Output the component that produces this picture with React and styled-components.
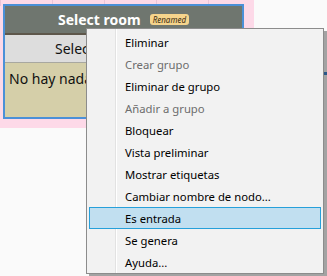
import React from "react";
import styled, { createGlobalStyle } from "styled-components";

const Global = createGlobalStyle`
  html, body { margin: 0; padding: 0; }
  body {
    background: #fafafa;
    width: 327px;
    height: 276px;
    overflow: hidden;
    font-family: "Noto Sans", "Open Sans", sans-serif;
  }
`;

const Page = styled.div`
  position: relative;
  width: 327px;
  height: 276px;
`;

const Canvas = styled.div`
  width: 254px;
  height: 128px;
  box-sizing: border-box;
  padding: 4px 0 0 3px;
  background-color: #fdd9e8;
  background-image:
    linear-gradient(to right, rgba(200, 160, 190, 0.35) 1px, transparent 1px);
  background-size: 52px 6px;
  background-repeat: repeat-x;
`;

const Node = styled.div`
  width: 241px;
  box-sizing: border-box;
  border: 2px solid #4b90d8;
  display: flex;
  flex-direction: column;
`;

const Header = styled.div`
  height: 27px;
  background: #6f766f;
  border-bottom: 2px solid #5e574b;
  display: flex;
  align-items: center;
  justify-content: center;
  gap: 9px;
  color: #ffffff;
  font-weight: 700;
  font-size: 14px;
`;

const Badge = styled.span`
  background: #f6d48c;
  color: #3a2a10;
  border-radius: 3px;
  font-size: 8px;
  font-style: italic;
  font-weight: 400;
  padding: 1px 3px;
  line-height: 9px;
`;

const SelectRow = styled.div`
  height: 27px;
  background: #dddddd;
  border-bottom: 1px solid #a8a8a0;
  display: flex;
  align-items: center;
  padding-left: 50px;
  font-size: 14px;
  color: #111;
  white-space: nowrap;
  overflow: hidden;
`;

const Body = styled.div`
  height: 54px;
  background: #d5cfa9;
  padding: 6px 4px;
  box-sizing: border-box;
  font-size: 14px;
  color: #111;
`;

const Stub = styled.div`
  position: absolute;
  left: 321px;
  top: 72px;
  width: 6px;
  height: 3px;
  background: #3f86d1;
`;

const Menu = styled.div`
  position: absolute;
  left: 86px;
  top: 28px;
  width: 238px;
  box-sizing: border-box;
  background: #f2f2f2;
  border: 1px solid #8c8c8c;
  box-shadow: 3px 3px 0 rgba(0, 0, 0, 0.35);
  padding: 2px 2px 0;
  display: flex;
  flex-direction: column;
`;

const Gutter = styled.div`
  position: absolute;
  left: 28px;
  top: 0;
  bottom: 0;
  width: 1px;
  background: #e2e2e2;
  border-right: 1px solid #ffffff;
`;

const Item = styled.div`
  position: relative;
  height: 22px;
  box-sizing: border-box;
  display: flex;
  align-items: center;
  padding-left: 35px;
  font-size: 11.3px;
  color: ${(p) => (p.$disabled ? "#6d6d6d" : "#000000")};
  border: 1px solid ${(p) => (p.$active ? "#26a0da" : "transparent")};
  background: ${(p) => (p.$active ? "#c1dff0" : "transparent")};
`;

const items = [
  { label: "Eliminar" },
  { label: "Crear grupo", disabled: true },
  { label: "Eliminar de grupo" },
  { label: "Añadir a grupo", disabled: true },
  { label: "Bloquear" },
  { label: "Vista preliminar" },
  { label: "Mostrar etiquetas" },
  { label: "Cambiar nombre de nodo..." },
  { label: "Es entrada", active: true },
  { label: "Se genera" },
  { label: "Ayuda..." },
];

export default function App() {
  return (
    <Page>
      <Global />
      <Canvas>
        <Node>
          <Header>
            <span>Select room</span>
            <Badge>Renamed</Badge>
          </Header>
          <SelectRow>Select...</SelectRow>
          <Body>No hay nada</Body>
        </Node>
      </Canvas>
      <Stub />
      <Menu>
        <Gutter />
        {items.map((it) => (
          <Item key={it.label} $disabled={it.disabled} $active={it.active}>
            {it.label}
          </Item>
        ))}
      </Menu>
    </Page>
  );
}
